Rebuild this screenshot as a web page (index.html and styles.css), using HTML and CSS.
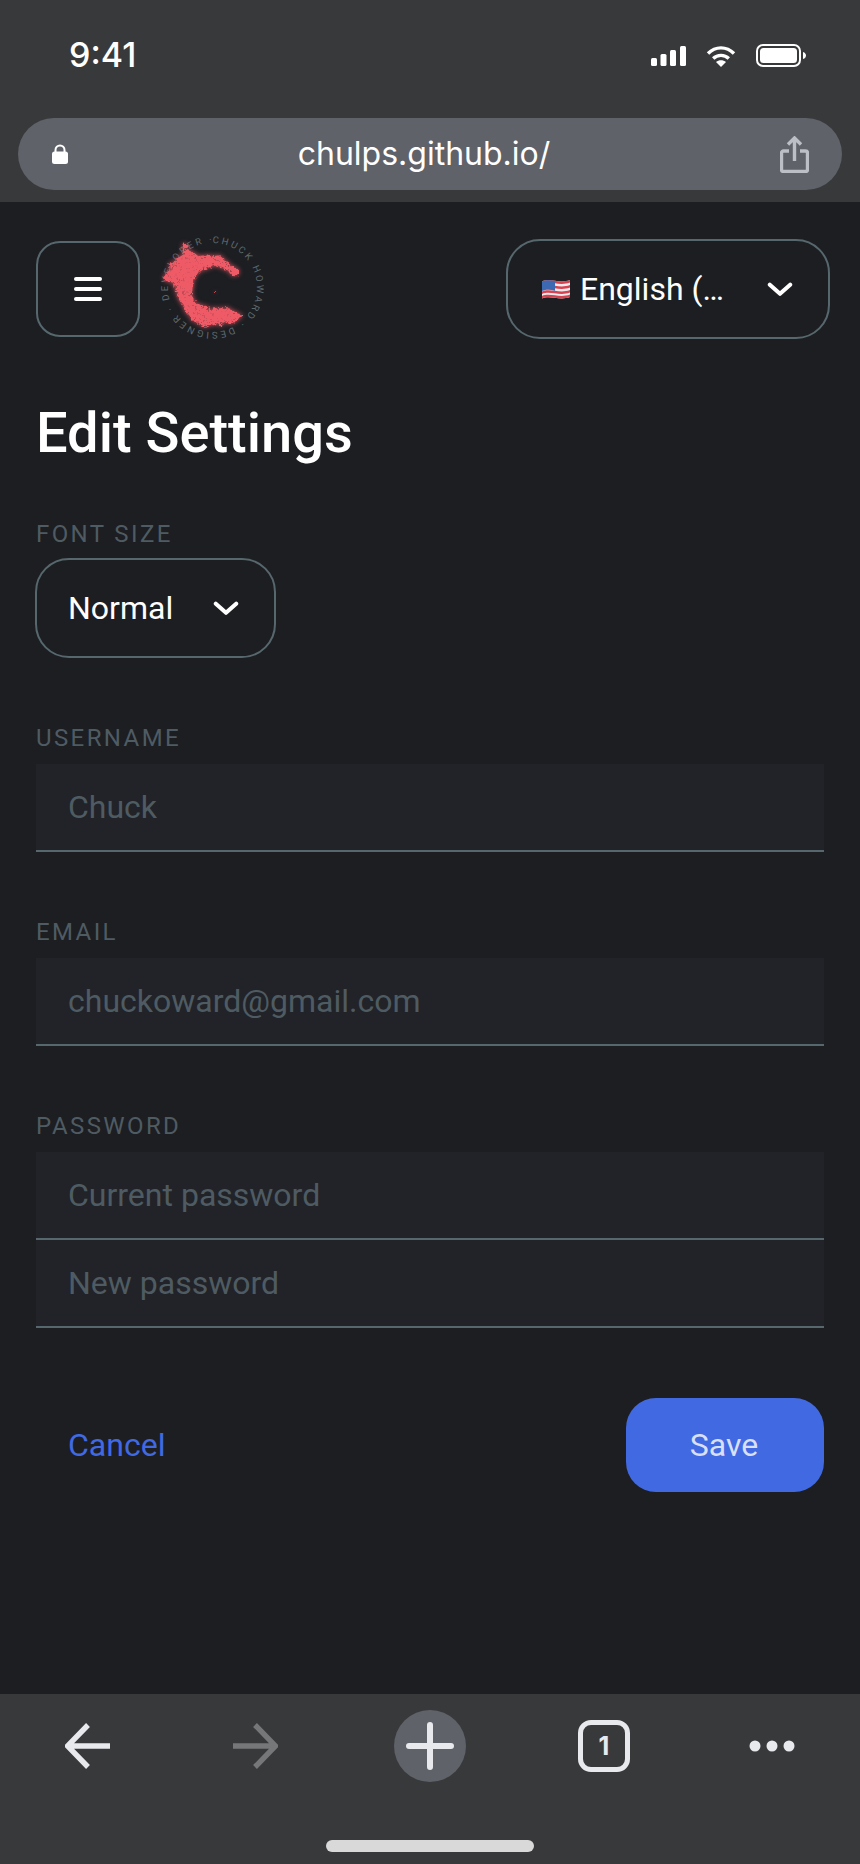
FILE: index.html
```html
<!DOCTYPE html>
<html lang="en">
<head>
<meta charset="utf-8">
<title>Edit Settings</title>
<link rel="stylesheet" href="styles.css">
</head>
<body>
<div class="screen">
  <header class="browser-top">
    <div class="status">
      <span class="time">9:41</span>
      <div class="status-icons">
        <svg class="i-signal" width="35" height="20" viewBox="0 0 35 20"><rect x="0" y="12" width="6" height="8" rx="1.5"/><rect x="9.5" y="8" width="6" height="12" rx="1.5"/><rect x="19" y="4" width="6" height="16" rx="1.5"/><rect x="29" y="0" width="6" height="20" rx="1.5"/></svg>
        <svg class="i-wifi" width="32" height="22" viewBox="0 0 30 22"><path d="M2 8.500C9.500 1 20.500 1 28 8.500" fill="none" stroke="#fff" stroke-width="3.400"/><path d="M7.200 13.500C11.500 9.300 18.500 9.300 22.800 13.500" fill="none" stroke="#fff" stroke-width="3.400"/><path d="M15 22l-5-5c2.800-2.500 7.200-2.500 10 0z" fill="#fff"/></svg>
        <svg class="i-batt" width="51" height="23" viewBox="0 0 51 23"><rect x="1" y="1" width="43" height="21" rx="6" fill="none" stroke="#fff" stroke-width="2"/><rect x="4" y="4" width="37" height="15" rx="3.500" fill="#fff"/><path d="M47 8c2 .5 3 2 3 3.500s-1 3-3 3.500z" fill="#fff"/></svg>
      </div>
    </div>
    <div class="url-bar">
      <svg class="i-lock" width="16" height="20" viewBox="0 0 16 20"><path d="M3.500 9V6a4.500 4.500 0 0 1 9 0v3" fill="none" stroke="#fff" stroke-width="2"/><rect x="0" y="7.500" width="16" height="12.500" rx="2.500" fill="#fff"/></svg>
      <span class="url-text">chulps.github.io/</span>
      <svg class="i-share" width="29" height="37" viewBox="0 0 29 37"><path d="M9 15H3.500A2 2 0 0 0 1.500 17V33.500A2 2 0 0 0 3.500 35.500H25.500A2 2 0 0 0 27.500 33.500V17A2 2 0 0 0 25.500 15H20" fill="none" stroke="#bdbfc6" stroke-width="3.400"/><path d="M14.500 25V3M8 8.500L14.500 2L21 8.500" fill="none" stroke="#bdbfc6" stroke-width="3.400"/></svg>
    </div>
  </header>

  <main class="page">
    <div class="topnav">
      <button class="menu-btn" type="button" aria-label="Menu">
        <svg width="28" height="26" viewBox="0 0 28 26"><rect y="1" width="28" height="4" rx="2" fill="#fff"/><rect y="11" width="28" height="4" rx="2" fill="#fff"/><rect y="21" width="28" height="4" rx="2" fill="#fff"/></svg>
      </button>
      <svg class="logo" width="130" height="130" viewBox="0 0 130 130">
        <defs>
          <filter id="rough" x="-30%" y="-30%" width="160%" height="160%" color-interpolation-filters="sRGB">
            <feTurbulence type="fractalNoise" baseFrequency="0.3" numOctaves="2" seed="11" result="n"/>
            <feTurbulence type="fractalNoise" baseFrequency="0.4" numOctaves="2" seed="3" result="n2"/>
            <feColorMatrix in="n2" type="matrix" values="0 0 0 0 0  0 0 0 0 0  0 0 0 0 0  12 0 0 0 -7.200" result="holes"/>
            <feComposite in="SourceGraphic" in2="holes" operator="out" result="cut"/>
            <feDisplacementMap in="cut" in2="n" scale="6" xChannelSelector="R" yChannelSelector="G" result="d"/>
            <feGaussianBlur in="d" stdDeviation="2.600" result="b"/>
            <feMerge><feMergeNode in="b"/><feMergeNode in="d"/></feMerge>
          </filter>
          <path id="ring" d="M62.500 18A44.500 44.500 0 1 1 62.400 18"/>
        </defs>
        <text class="logo-text"><textPath href="#ring" textLength="278" lengthAdjust="spacing">CHUCK HOWARD · DESIGNER · DEVELOPER · </textPath></text>
        <g filter="url(#rough)" fill="#ee5a66">
          <path transform="translate(1 2) scale(.3333)" d="M95 45L108 55L112 70L130 78L142 88L165 85L185 88L205 85L222 100L240 115L262 128L262 140L250 150L238 140L222 126L205 120L190 116L170 122L148 132L132 155L124 185L124 205L136 228L165 240L190 244L215 244L235 244L252 255L272 265L262 278L240 290L225 285L210 295L190 290L165 302L140 290L125 275L108 262L100 240L85 220L75 195L70 175L52 165L35 150L42 140L55 130L55 112L72 105L82 90L100 85L95 65Z"/>
          <circle cx="64" cy="67" r="1"/>
        </g>
      </svg>
      <div class="select lang">
        <svg class="flag" width="28" height="20" viewBox="0 0 28 20"><path d="M0 2.500C8 -1 18 5 28 1V18C18 22 8 16 0 19.500Z" fill="#e9eaee"/><path d="M0 2.500C8 -1 18 5 28 1V3.500C18 7.500 8 1.500 0 5ZM0 7.500C8 4 18 10 28 6V8.500C18 12.500 8 6.500 0 10ZM0 12.500C8 9 18 15 28 11V13.500C18 17.500 8 11.500 0 15ZM0 17C8 13.500 18 19.500 28 15.500V18C18 22 8 16 0 19.500Z" fill="#d8414e"/><path d="M0 2.500C4.500 .5 9 1.200 13 2.300V11.800C9 10.700 4.500 10 0 12Z" fill="#3d69b3"/></svg>
        <span class="select-text">English (…</span>
        <svg class="chev" width="26" height="15" viewBox="0 0 24 14"><path d="M2.500 2.500L12 11L21.500 2.500" fill="none" stroke="#fff" stroke-width="3.800" stroke-linecap="round" stroke-linejoin="round"/></svg>
      </div>
    </div>

    <h1 class="title">Edit Settings</h1>

    <form class="form">
      <div class="field field-font">
        <div class="label">FONT SIZE</div>
        <div class="select font-select">
          <span class="select-text">Normal</span>
          <svg class="chev" width="26" height="15" viewBox="0 0 24 14"><path d="M2.500 2.500L12 11L21.500 2.500" fill="none" stroke="#fff" stroke-width="3.800" stroke-linecap="round" stroke-linejoin="round"/></svg>
        </div>
      </div>
      <div class="field">
        <div class="label label-input">USERNAME</div>
        <input class="input" type="text" placeholder="Chuck">
      </div>
      <div class="field">
        <div class="label label-input">EMAIL</div>
        <input class="input" type="text" placeholder="chuckoward@gmail.com">
      </div>
      <div class="field">
        <div class="label label-input">PASSWORD</div>
        <input class="input" type="password" placeholder="Current password">
        <input class="input" type="password" placeholder="New password">
      </div>
      <div class="actions">
        <button class="btn-cancel" type="button">Cancel</button>
        <button class="btn-save" type="button">Save</button>
      </div>
    </form>
  </main>

  <footer class="browser-bottom">
    <div class="toolbar">
      <svg width="46" height="46" viewBox="0 0 46 46"><path d="M45 23H4M23 2L2.500 23L23 44" fill="none" stroke="#e8e9ed" stroke-width="5.400"/></svg>
      <svg width="46" height="46" viewBox="0 0 46 46"><path d="M1 23H42M23 2L43.500 23L23 44" fill="none" stroke="#767779" stroke-width="5.400"/></svg>
      <div class="plus">
        <svg width="48" height="48" viewBox="0 0 48 48"><path d="M3 24H45M24 3V45" stroke="#e8e9ed" stroke-width="6" stroke-linecap="round"/></svg>
      </div>
      <div class="tabs"><span>1</span></div>
      <svg width="46" height="12" viewBox="0 0 46 12"><circle cx="6" cy="6" r="5.500" fill="#e8e9ed"/><circle cx="23" cy="6" r="5.500" fill="#e8e9ed"/><circle cx="40" cy="6" r="5.500" fill="#e8e9ed"/></svg>
    </div>
    <div class="home-bar"></div>
  </footer>
</div>
</body>
</html>
```

FILE: styles.css
```css
* { box-sizing: border-box; }
html, body { margin: 0; padding: 0; }
body { background: #1c1e22; font-family: Roboto, "Liberation Sans", sans-serif; }
.screen { width: 860px; height: 1864px; display: flex; flex-direction: column; overflow: hidden; }

.browser-top { height: 202px; background: #38393b; padding: 0 18px; flex: none; }
.status { height: 118px; display: flex; justify-content: space-between; padding: 36px 35px 0 51px; }
.time { font: 500 34px/37px Inter, sans-serif; color: #fff; }
.status-icons { display: flex; align-items: flex-start; gap: 19px; padding-top: 8px; }
.i-signal { fill: #fff; margin-top: 2px; margin-left: -1px; }
.i-wifi { margin-top: 1px; }
.url-bar { height: 72px; background: #5f6269; border-radius: 36px; display: flex; align-items: center; padding: 0 33px 0 34px; }
.i-lock { flex: none; }
.url-text { flex: 1; text-align: center; color: #fff; font: 400 32px/40px Inter, sans-serif; }
.i-share { flex: none; }

.page { flex: 1; padding: 37px 36px 0; min-height: 0; }
.topnav { display: flex; align-items: center; height: 100px; }
.menu-btn { width: 104px; height: 96px; background: transparent; border: 2px solid #56676d; border-radius: 24px; display: flex; align-items: center; justify-content: center; padding: 0; flex: none; }
.logo { flex: none; margin: -14px 0 0 10px; align-self: flex-start; }
.logo-text { font: 400 9.500px Roboto, sans-serif; fill: #5c6a70; }

.select { display: flex; align-items: center; border: 2px solid #56676d; border-radius: 34px; color: #fff; }
.select-text { font: 400 32px/40px Roboto, sans-serif; white-space: nowrap; }
.chev { flex: none; }
.lang { width: 324px; height: 100px; margin-left: auto; margin-right: -6px; padding: 0 35px 0 34px; }
.flag { margin-right: 10px; flex: none; }
.lang .chev { margin-left: auto; }

.title { margin: 60px 0 0; font: 500 56px/68px Roboto, sans-serif; color: #fff; }

.field { margin-top: 64px; }
.field-font { margin-top: 52px; }
.label { color: #4f5b62; font: 400 24px/30px Roboto, sans-serif; letter-spacing: 2.400px; }
.label-input { padding-top: 1px; line-height: 30px; margin-bottom: 11px; }
.font-select { width: 241px; height: 100px; margin: 9px 0 0 -1px; padding: 0 35px 0 31px; justify-content: space-between; }

.input { display: block; width: 100%; height: 88px; background: #212328; border: 0; border-bottom: 2px solid #56676d; border-radius: 0; padding: 0 32px; font: 400 32px Roboto, sans-serif; color: #fff; outline: none; }
.input::placeholder { color: #4f5b62; opacity: 1; }

.actions { display: flex; justify-content: space-between; align-items: center; margin-top: 70px; }
.btn-cancel { background: none; border: 0; padding: 0 32px; font: 400 32px Roboto, sans-serif; color: #4169e1; }
.btn-save { width: 198px; height: 94px; background: #4169e1; border: 0; border-radius: 30px; color: #d8dff7; font: 400 32px Roboto, sans-serif; padding: 0 2px 0 0; }

.browser-bottom { height: 170px; background: #38393b; flex: none; position: relative; }
.toolbar { display: flex; align-items: center; height: 104px; }
.toolbar > svg:nth-child(1) { margin-left: 65px; }
.toolbar > svg:nth-child(2) { margin-left: 121px; }
.plus { width: 72px; height: 72px; border-radius: 50%; background: #5f6269; margin-left: 116px; display: flex; align-items: center; justify-content: center; flex: none; }
.tabs { width: 52px; height: 52px; border: 5px solid #e8e9ed; border-radius: 13px; margin-left: 112px; display: flex; align-items: center; justify-content: center; color: #e8e9ed; font: 700 25px/1 Inter, sans-serif; flex: none; }
.toolbar > svg:nth-child(5) { margin-left: 119px; }
.home-bar { position: absolute; left: 326px; top: 146px; width: 208px; height: 12px; border-radius: 6px; background: #d9d9d9; }
```
